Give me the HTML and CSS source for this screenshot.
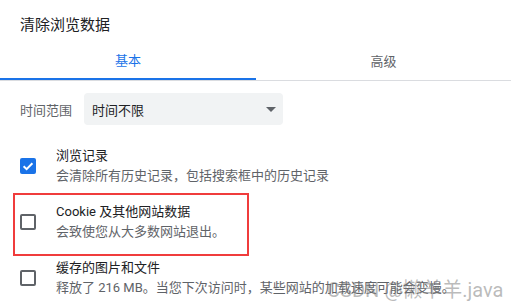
FILE: index.html
```html
<!DOCTYPE html>
<html lang="zh-CN">
<head>
<meta charset="utf-8">
<title>清除浏览数据</title>
<link rel="stylesheet" href="styles.css">
</head>
<body>
<div class="dialog">
  <div class="title">清除浏览数据</div>
  <div class="tabs">
    <div class="tab active"><span class="tab-label">基本</span></div>
    <div class="tab"><span class="tab-label">高级</span></div>
  </div>
  <div class="range-row">
    <span class="range-label">时间范围</span>
    <div class="select">
      <span class="select-value">时间不限</span>
      <span class="select-arrow"></span>
    </div>
  </div>
  <div class="option">
    <span class="checkbox checked">
      <svg viewBox="0 0 16 16" width="16" height="16"><path d="M3.6 8.2 L6.6 11.1 L12.4 5.2" fill="none" stroke="#fff" stroke-width="2"/></svg>
    </span>
    <div class="option-text">
      <div class="option-title">浏览记录</div>
      <div class="option-sub">会清除所有历史记录，包括搜索框中的历史记录</div>
    </div>
  </div>
  <div class="option">
    <span class="checkbox"></span>
    <div class="option-text">
      <div class="option-title">Cookie 及其他网站数据</div>
      <div class="option-sub">会致使您从大多数网站退出。</div>
    </div>
  </div>
  <div class="option">
    <span class="checkbox"></span>
    <div class="option-text">
      <div class="option-title">缓存的图片和文件</div>
      <div class="option-sub">释放了 216 MB。当您下次访问时，某些网站的加载速度可能会变慢。</div>
    </div>
  </div>
  <div class="highlight"></div>
  <div class="watermark">CSDN @懒羊羊.java</div>
</div>
</body>
</html>
```
FILE: styles.css
```css
html, body {
  margin: 0;
  padding: 0;
  background: #fff;
}
body {
  font-family: Roboto, "Noto Sans CJK SC", sans-serif;
  color: #202124;
  overflow: hidden;
}
.dialog {
  position: relative;
  width: 511px;
  height: 305px;
  overflow: hidden;
}
.title {
  padding: 15px 20px 5px;
  font-size: 15px;
  line-height: 20px;
  color: #202124;
}
.tabs {
  display: flex;
  border-bottom: 1px solid #dadce0;
}
.tab {
  flex: 0 0 256px;
  height: 40px;
  box-sizing: border-box;
  display: flex;
  align-items: center;
  justify-content: center;
  font-size: 13px;
  color: #5f6368;
  padding-top: 1px;
}
.tab:last-child {
  flex: 1;
}
.tab.active {
  color: #1a73e8;
  border-bottom: 2px solid #1a73e8;
}
.range-row {
  display: flex;
  align-items: center;
  gap: 12px;
  padding: 12px 20px 0;
}
.range-label {
  font-size: 13px;
  color: #5f6368;
}
.select {
  width: 199px;
  height: 32px;
  box-sizing: border-box;
  background: #f1f3f4;
  border-radius: 4px;
  display: flex;
  align-items: center;
  justify-content: space-between;
  padding: 0 7px 0 8px;
  font-size: 13px;
  color: #202124;
}
.select-arrow {
  width: 0;
  height: 0;
  border-left: 5px solid transparent;
  border-right: 5px solid transparent;
  border-top: 5px solid #5f6368;
}
.range-row + .option {
  margin-top: 13px;
}
.option {
  display: flex;
  align-items: center;
  gap: 20px;
  height: 56px;
  box-sizing: border-box;
  padding: 0 20px;
}
.checkbox {
  flex: 0 0 16px;
  width: 16px;
  height: 16px;
  box-sizing: border-box;
  border: 2px solid #5f6368;
  border-radius: 2px;
  display: flex;
}
.checkbox.checked {
  background: #1a73e8;
  border: none;
}
.option-text {
  font-size: 13px;
  line-height: 20px;
  white-space: nowrap;
}
.option-title {
  color: #202124;
}
.option-sub {
  color: #5f6368;
}
.highlight {
  position: absolute;
  left: 13px;
  top: 193px;
  width: 236px;
  height: 63px;
  box-sizing: border-box;
  border: 2px solid #f03c3c;
}
.watermark {
  position: absolute;
  left: 327px;
  top: 279px;
  font-size: 20px;
  line-height: 22px;
  color: rgba(120, 120, 120, 0.5);
  white-space: nowrap;
}
```
